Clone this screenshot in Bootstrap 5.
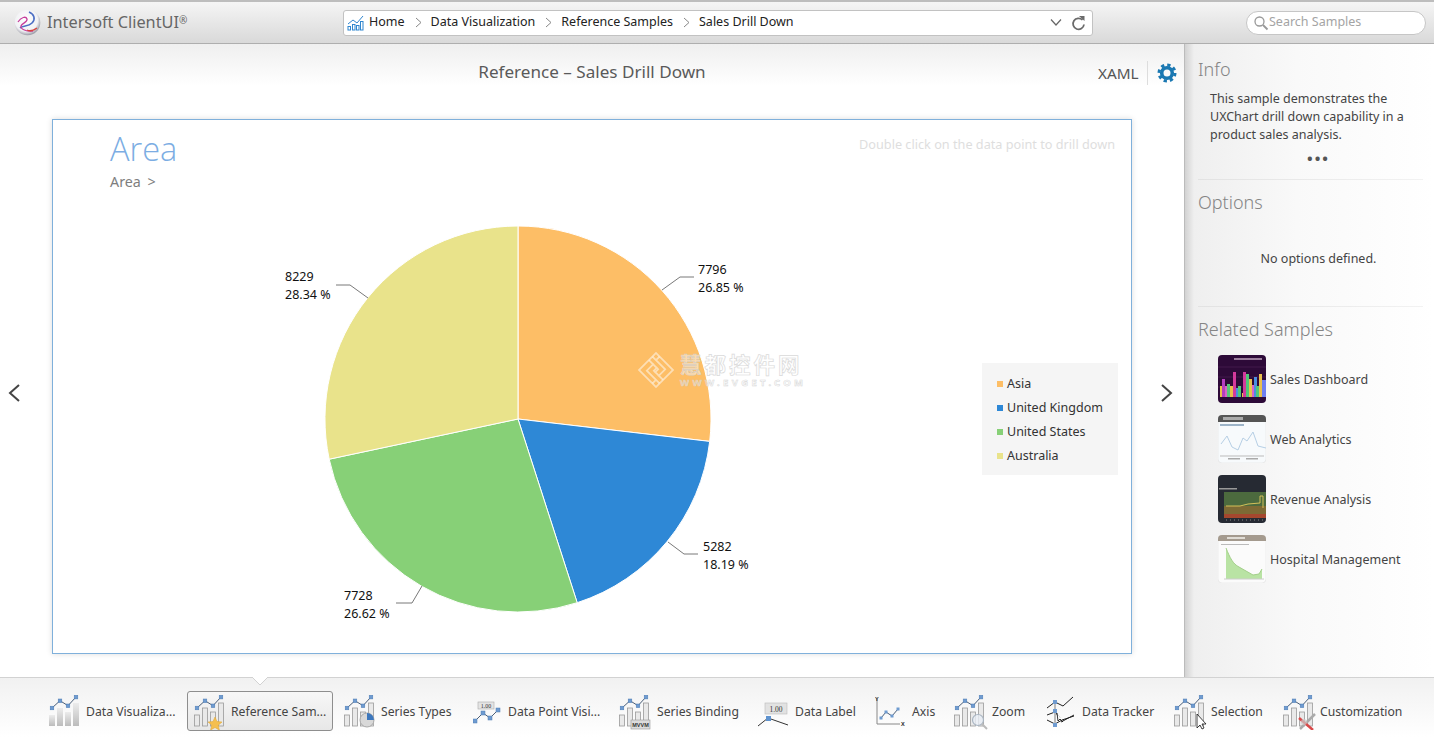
<!DOCTYPE html>
<html lang="en">
<head>
<meta charset="utf-8">
<title>Intersoft ClientUI</title>
<link href="https://cdn.jsdelivr.net/npm/bootstrap@5.3.0/dist/css/bootstrap.min.css" rel="stylesheet">
<style>
html,body{height:737px;overflow:hidden;}
body{font-family:"Noto Sans","Open Sans","Liberation Sans",sans-serif;font-size:12.5px;color:#444;background:#fff;}
.defs-svg{width:0;height:0;display:block;}
.app-shell{width:1434px;height:737px;}
.top-strip{height:44px;background:linear-gradient(#f5f5f5,#d9d9d9);border-top:2px solid #bdbdbd;border-bottom:1px solid #aeaeae;}
.brand-logo{width:27px;height:27px;margin-left:14px;}
.brand-name{font-size:16.3px;color:#666;margin-left:6px;width:296px;white-space:nowrap;}
.brand-name sup{font-size:10px;top:-.45em;}
.address-box{width:750px;height:26px;background:#fff;border:1px solid #c2c2c2;border-radius:3px;padding:0 6px 0 3px;color:#222;}
.crumb-sep{width:7px;height:11px;margin:0 9px 0 10px;flex:none;}
.crumb-ico{width:17px;height:16px;margin-right:5px;}
.search-pill{width:180px;height:24px;margin-left:153px;background:#fff;border:1px solid #c6c6c6;border-radius:12px;padding-left:6px;color:#a4a4a4;}
.work-zone{height:633px;}
.main-pane{width:1184px;background:linear-gradient(#efefef 0,#fff 42px);}
.title-row{height:56px;padding-right:8px;}
.page-title{font-size:17.1px;color:#5a5a5a;text-align:center;width:1184px;margin-top:-1px;}
.xaml-actions{width:0;flex:none;transform:translate(-86px,1px);}
.xaml-word{font-size:15.3px;color:#555;}
.xaml-rule{width:1px;height:24px;background:#ddd;margin:0 9px 0 8px;flex:none;}
.stage-row{height:554px;padding-top:19px;}
.side-arrow{width:52px;flex:none;margin-top:12px;}
.chart-frame{width:1080px;height:535px;border:1px solid #7fb0db;box-shadow:0 0 6px rgba(0,0,0,.14);background:#fff;}
.frame-head{height:72px;padding:7px 16px 0 57px;}
.area-big{font-size:32.5px;line-height:44px;color:#7cade3;font-weight:300;font-family:"Open Sans","Noto Sans",sans-serif;}
.area-small{font-size:14.300px;line-height:18px;color:#7e7e7e;margin-top:2px;word-spacing:3px;}
.drill-hint{font-size:12.700px;color:#dedede;margin-top:8px;}
.chart-row{height:461px;}
.pie-svg{width:925px;height:461px;display:block;flex:none;}
.legend-box{width:136px;height:112px;margin:171px 0 0 4px;background:#f5f5f5;padding:9px 0 0 15px;color:#333;}
.legend-line{height:24px;}
.swatch{width:6px;height:6px;margin-right:4px;flex:none;}
.c-asia{background:#fdbe66;}.c-uk{background:#2e88d6;}.c-us{background:#87d077;}.c-au{background:#e9e38b;}
.side-pane{width:250px;background:linear-gradient(90deg,#d2d2d2 0,#efefef 9px,#f9f9f9 45%,#fff 100%);padding:0 11px 0 13px;border-left:1px solid #bbb;}
.side-head{font-size:18px;line-height:24px;color:#858585;font-weight:300;}
.head-info{margin-top:13px;}
.head-options{margin-top:10px;}
.head-related{margin:10px 0 8px;}
.side-text{padding-left:12px;line-height:18px;margin-top:9px;color:#444;}
.more-dots{text-align:center;font-weight:700;font-size:15px;letter-spacing:2px;line-height:14px;color:#555;padding-left:16px;margin-top:7px;height:28px;}
.side-rule{height:1px;background:linear-gradient(90deg,#e2e2e2,#f2f2f2);}
.none-note{text-align:center;padding-left:16px;margin-top:36px;height:56px;}
.related-row{height:60px;padding-left:20px;gap:4px;}
.related-name{margin-top:2px;}
.thumb-svg{width:48px;height:48px;flex:none;}
.tool-strip{height:60px;padding-top:13px;background:linear-gradient(#f1f1f1,#fff);border-top:1px solid #d2d2d2;position:relative;}
.tool-grid{display:grid;grid-template-columns:144px 151px 130px 145px 140px 117px 78px 93px 127px 109px 130px;margin-left:43px;font-size:12.200px;}
.tool-item{height:40px;color:#444;white-space:nowrap;padding:2px 0 0 5px;gap:2px;}
.tool-item svg{height:36px;flex:none;}
.w36{width:36px;}.w37{width:37px;}.w33{width:33px;}.w35{width:35px;}.w34{width:34px;}
.tool-active{margin-right:5px;border:1px solid #8e8e8e;border-radius:3px;background:linear-gradient(#f7f7f7,#e7e7e7);}
.tip-caret{position:absolute;left:252px;top:-1px;width:16px;height:9px;}
.ico-xs{width:14px;height:9px;}
.arrow-shift{margin-left:17px;}
</style>
</head>
<body>
<svg class="defs-svg" aria-hidden="true">
<defs>
<linearGradient id="gb" x1="0" y1="0" x2="0" y2="1"><stop offset="0" stop-color="#ececec"/><stop offset="1" stop-color="#bcbcbc"/></linearGradient>
<radialGradient id="orb" cx=".45" cy=".4" r=".62"><stop offset="0" stop-color="#fff"/><stop offset=".72" stop-color="#f1f1f4"/><stop offset="1" stop-color="#8f8f9c"/></radialGradient>
<symbol id="s-line" viewBox="0 0 36 36"><path d="M4 14 12 6.700 20 11.700 28 3" fill="none" stroke="#4a5e78" stroke-width="1"/><g fill="#6f9bd0" stroke="#4d7db5" stroke-width=".5"><rect x="2.200" y="12.200" width="3.600" height="3.600"/><rect x="10.200" y="5" width="3.600" height="3.600"/><rect x="18.200" y="10" width="3.600" height="3.600"/><rect x="26.200" y="1.300" width="3.600" height="3.600"/></g></symbol>
<symbol id="s-solid" viewBox="0 0 36 36"><g fill="url(#gb)"><rect x="1" y="21" width="6" height="11"/><rect x="9" y="14" width="6" height="18"/><rect x="17" y="18" width="6" height="14"/><rect x="25" y="9" width="6" height="23"/></g><use href="#s-line" width="36" height="36"/></symbol>
<symbol id="s-open" viewBox="0 0 36 36"><g fill="#e9e9e9" stroke="#9a9a9a" stroke-width=".8"><rect x="1.500" y="21" width="5" height="11"/><rect x="9.500" y="14" width="5" height="18"/><rect x="17.500" y="18" width="5" height="14"/><rect x="25.500" y="9" width="5" height="23"/></g><use href="#s-line" width="36" height="36"/></symbol>
</defs>
</svg>
<div class="app-shell d-flex flex-column">
  <div class="top-strip d-flex align-items-center">
    <svg class="brand-logo" viewBox="0 0 27 27"><circle cx="13.500" cy="13.500" r="12.800" fill="url(#orb)"/><path d="M15 3c5 2 7 7 3 11s-9 2-12 5" fill="none" stroke="#4d6fc4" stroke-width="1.600"/><path d="M4 13c3-5 8-6 9-3s-5 4-6 7 6 6 12 5" fill="none" stroke="#c63d9c" stroke-width="1.300"/><path d="M13 21c4 2 7 0 10-2" fill="none" stroke="#d8423c" stroke-width="1.200"/></svg>
    <div class="brand-name">Intersoft ClientUI<sup>®</sup></div>
    <div class="address-box d-flex align-items-center">
      <svg class="crumb-ico" viewBox="0 0 17 16"><g fill="none" stroke="#2f86cf" stroke-width="1"><rect x="1" y="11.500" width="2.500" height="3.500"/><rect x="5.500" y="9.500" width="2.500" height="5.500"/><rect x="9.500" y="10.500" width="2.500" height="4.500"/><rect x="13.500" y="6.500" width="2.500" height="8.500"/><path d="M1 9 6 5l4 3 6-7"/></g></svg>
      <span>Home</span>
      <svg class="crumb-sep" viewBox="0 0 7 11"><path d="M1 1l5 4.500L1 10" fill="none" stroke="#888"/></svg>
      <span>Data Visualization</span>
      <svg class="crumb-sep" viewBox="0 0 7 11"><path d="M1 1l5 4.500L1 10" fill="none" stroke="#888"/></svg>
      <span>Reference Samples</span>
      <svg class="crumb-sep" viewBox="0 0 7 11"><path d="M1 1l5 4.500L1 10" fill="none" stroke="#888"/></svg>
      <span>Sales Drill Down</span>
      <svg class="ico-xs ms-auto" viewBox="0 0 14 9"><path d="M2 1.500 7 7l5-5.500" fill="none" stroke="#666" stroke-width="1.200"/></svg>
      <svg class="ms-2" width="15" height="16" viewBox="0 0 15 16"><path d="M11.500 5A5.500 5.500 0 1 0 13 9.500" fill="none" stroke="#6a6a6a" stroke-width="1.800"/><path d="M8 1h5.500v5z" fill="#6a6a6a"/></svg>
    </div>
    <div class="search-pill d-flex align-items-center">
      <svg width="16" height="16" viewBox="0 0 16 16"><circle cx="6.500" cy="6.500" r="4.500" fill="none" stroke="#999" stroke-width="1.300"/><path d="M10 10l4.500 4.500" stroke="#999" stroke-width="1.800"/></svg>
      <span>Search Samples</span>
    </div>
  </div>
  <div class="work-zone d-flex">
    <div class="main-pane">
      <div class="title-row d-flex align-items-center">
        <div class="page-title flex-shrink-0">Reference – Sales Drill Down</div>
        <div class="xaml-actions d-flex align-items-center">
          <span class="xaml-word">XAML</span>
          <span class="xaml-rule"></span>
          <svg class="flex-shrink-0" width="20" height="20" viewBox="0 0 20 20"><circle cx="10" cy="10" r="5.300" fill="none" stroke="#1a78b2" stroke-width="3.600"/><circle cx="10" cy="10" r="8" fill="none" stroke="#1a78b2" stroke-width="3" stroke-dasharray="3.300 2.980"/></svg>
        </div>
      </div>
      <div class="stage-row d-flex align-items-start">
        <div class="side-arrow d-flex justify-content-center align-self-center"><svg width="16" height="20" viewBox="0 0 16 20" class="me-4"><path d="M13 2 4 10l9 8" fill="none" stroke="#444" stroke-width="2"/></svg></div>
        <div class="chart-frame flex-shrink-0">
          <div class="frame-head d-flex justify-content-between align-items-start">
            <div><div class="area-big">Area</div><div class="area-small">Area &gt;</div></div>
            <div class="drill-hint">Double click on the data point to drill down</div>
          </div>
          <div class="chart-row d-flex align-items-start">
            <svg class="pie-svg" viewBox="53 192 925 461">
              <g stroke="#fff" stroke-width="1">
                <path d="M518 419V226A193 193 0 0 1 709.700 441.400Z" fill="#fdbe66"/>
                <path d="M518 419 709.700 441.400A193 193 0 0 1 577.200 602.700Z" fill="#2e88d6"/>
                <path d="M518 419 577.200 602.700A193 193 0 0 1 329.200 459.200Z" fill="#87d077"/>
                <path d="M518 419 329.200 459.200A193 193 0 0 1 518 226Z" fill="#e9e38b"/>
              </g>
              <g fill="none" stroke="#555" stroke-width=".8">
                <path d="M662 290 680 277H694"/><path d="M368 298 350 285H336"/><path d="M668 542 684 554H698"/><path d="M422 586 412 603H396"/>
              </g>
              <g font-family="'Noto Sans',sans-serif" font-size="12.500" fill="#111">
                <text x="698" y="274">7796</text><text x="698" y="292">26.85 %</text>
                <text x="285" y="281">8229</text><text x="285" y="299">28.34 %</text>
                <text x="703" y="551">5282</text><text x="703" y="569">18.19 %</text>
                <text x="344" y="600">7728</text><text x="344" y="618">26.62 %</text>
              </g>
              <g opacity=".85">
                <g transform="translate(656 370) rotate(45)" fill="none" stroke="#fff" stroke-opacity=".6" stroke-width="1.800"><rect x="-12" y="-12" width="24" height="24"/><path d="M-12-7H6V3M-12-2H1V3M-7-12V-7M12 7H-6V-3M12 2H-1V-3M7 12V7"/></g>
                <text x="680" y="373" font-family="'Noto Sans CJK SC',sans-serif" font-weight="700" font-size="21.500" letter-spacing="3" fill="#fff" fill-opacity=".55" stroke="#d4d4d4" stroke-width=".7">慧都控件网</text>
                <text x="680" y="385.500" textLength="123" font-family="'Noto Sans',sans-serif" font-weight="700" font-size="9.500" fill="#fff" fill-opacity=".55" stroke="#d0d0d0" stroke-width=".5">WWW.EVGET.COM</text>
              </g>
            </svg>
            <div class="legend-box flex-shrink-0">
              <div class="legend-line d-flex align-items-center"><span class="swatch c-asia"></span>Asia</div>
              <div class="legend-line d-flex align-items-center"><span class="swatch c-uk"></span>United Kingdom</div>
              <div class="legend-line d-flex align-items-center"><span class="swatch c-us"></span>United States</div>
              <div class="legend-line d-flex align-items-center"><span class="swatch c-au"></span>Australia</div>
            </div>
          </div>
        </div>
        <div class="side-arrow d-flex justify-content-center align-self-center"><svg width="16" height="20" viewBox="0 0 16 20" class="arrow-shift"><path d="M3 2l9 8-9 8" fill="none" stroke="#444" stroke-width="2"/></svg></div>
      </div>
    </div>
    <div class="side-pane flex-grow-1">
      <div class="side-head head-info">Info</div>
      <div class="side-text">This sample demonstrates the UXChart drill down capability in a product sales analysis.</div>
      <div class="more-dots">•••</div>
      <div class="side-rule"></div>
      <div class="side-head head-options">Options</div>
      <div class="none-note">No options defined.</div>
      <div class="side-rule"></div>
      <div class="side-head head-related">Related Samples</div>
      <div class="related-row d-flex align-items-center">
        <svg class="thumb-svg" viewBox="0 0 48 48"><rect width="48" height="48" rx="4" fill="#2d0a38"/><path d="M0 12H48M0 22H48M0 32H48" stroke="#5a2a5e" stroke-width=".5"/><rect x="16" y="3" width="28" height="2" fill="#9a7d9c"/><g><rect x="2" y="31" width="3" height="11" fill="#e9c04c"/><rect x="4" y="24" width="3" height="18" fill="#b43fc0"/><rect x="7" y="31" width="3" height="11" fill="#d964c8"/><rect x="9" y="29" width="3" height="13" fill="#56c879"/><rect x="12" y="31" width="3" height="11" fill="#e9c04c"/><rect x="15" y="33" width="3" height="9" fill="#e2a34c"/><rect x="15" y="17" width="3" height="25" fill="#d43a9c"/><rect x="18" y="33" width="3" height="9" fill="#4a8fe0"/><rect x="20" y="31" width="3" height="11" fill="#50c878"/><rect x="24" y="38" width="3" height="4" fill="#e9c04c"/><rect x="26" y="35" width="3" height="7" fill="#b43fc0"/><rect x="25" y="17" width="3" height="25" fill="#d43a9c"/><rect x="28" y="19" width="3" height="23" fill="#50c878"/><rect x="31" y="24" width="3" height="18" fill="#e9c04c"/><rect x="34" y="30" width="3" height="12" fill="#d964c8"/><rect x="36" y="22" width="3" height="20" fill="#4a8fe0"/><rect x="38" y="31" width="3" height="11" fill="#50c878"/><rect x="41" y="19" width="3" height="23" fill="#e9c04c"/><rect x="44" y="25" width="4" height="17" fill="#6f7ff0"/></g></svg>
        <span class="related-name">Sales Dashboard</span>
      </div>
      <div class="related-row d-flex align-items-center">
        <svg class="thumb-svg" viewBox="0 0 48 48"><rect width="48" height="48" rx="4" fill="#f7fafc" stroke="#ddd" stroke-width=".5"/><path d="M0 4a4 4 0 0 1 4-4h40a4 4 0 0 1 4 4v3H0z" fill="#555"/><rect x="5" y="2" width="20" height="3" fill="#aaa"/><rect x="2" y="9" width="24" height="2" fill="#9db4c8"/><path d="M3 29 9 21l5 11 6 3 5-12 4 3 6-9 5 14 8 2" fill="none" stroke="#b6cfe5" stroke-width="1"/><path d="M2 41H46" stroke="#bbb"/><rect x="10" y="43" width="12" height="1.500" fill="#aaa"/><rect x="28" y="43" width="12" height="1.500" fill="#aaa"/></svg>
        <span class="related-name">Web Analytics</span>
      </div>
      <div class="related-row d-flex align-items-center">
        <svg class="thumb-svg" viewBox="0 0 48 48"><rect width="48" height="48" rx="4" fill="#262a33"/><rect x="6" y="17" width="42" height="14" fill="#4c6a3e"/><rect x="6" y="31" width="42" height="9" fill="#7d6a35"/><rect x="6" y="39" width="42" height="4" fill="#a5472e"/><rect x="1" y="13" width="18" height="1.500" fill="#999"/><path d="M8 31H22l8-2 12-1V21h3v12" fill="none" stroke="#e2c95c" stroke-width=".9"/><path d="M8 45H46" stroke="#888" stroke-dasharray="1 3"/></svg>
        <span class="related-name">Revenue Analysis</span>
      </div>
      <div class="related-row d-flex align-items-center">
        <svg class="thumb-svg" viewBox="0 0 48 48"><rect width="48" height="48" rx="4" fill="#fbfbfb" stroke="#ddd" stroke-width=".5"/><path d="M0 4a4 4 0 0 1 4-4h40a4 4 0 0 1 4 4v2H0z" fill="#a49a8e"/><rect x="9" y="2" width="18" height="2" fill="#e0dcd5"/><rect x="3" y="9" width="28" height="1" fill="#bbb"/><path d="M8 13c4 10 7 16 13 19l14 8 6-1 3-5v10H8z" fill="#b9e3a4"/><path d="M8 13c4 10 7 16 13 19l14 8 6-1 3-5" fill="none" stroke="#a3cf8a"/><path d="M6 44H46" stroke="#ccc"/></svg>
        <span class="related-name">Hospital Management</span>
      </div>
    </div>
  </div>
  <div class="tool-strip">
    <svg class="tip-caret" viewBox="0 0 16 9"><path d="M0 0 8 8l8-8" fill="#fff" stroke="#d2d2d2"/></svg>
    <div class="tool-grid">
      <div class="tool-item d-flex align-items-center"><svg class="w36" viewBox="0 0 36 36"><use href="#s-solid"/></svg><span>Data Visualiza...</span></div>
      <div class="tool-item tool-active d-flex align-items-center"><svg class="w36" viewBox="0 0 36 36"><use href="#s-open"/><path d="M22 23l2 4.500 5 .5-3.700 3.200 1.100 5L22 33.500 17.600 36l1.100-5L15 28l5-.5z" fill="#f5bf4f" stroke="#dfa430" stroke-width=".5"/></svg><span>Reference Sam...</span></div>
      <div class="tool-item d-flex align-items-center"><svg class="w36" viewBox="0 0 36 36"><use href="#s-open"/><circle cx="24" cy="26" r="7" fill="#d8d8d8" stroke="#aaa"/><path d="M24 26v-7a7 7 0 0 1 7 7z" fill="#3c77bd"/></svg><span>Series Types</span></div>
      <div class="tool-item d-flex align-items-center"><svg class="w33" viewBox="0 0 33 36"><path d="M2 27 10 19l7 5 8-8" fill="none" stroke="#4a5e78"/><g fill="#6f9bd0" stroke="#4d7db5" stroke-width=".5"><rect x="0" y="25" width="4" height="4"/><rect x="8" y="17" width="4" height="4"/><rect x="15" y="22" width="4" height="4"/><rect x="23" y="14" width="4" height="4"/></g><rect x="5" y="8" width="16" height="7" fill="#e4e4e4" stroke="#aaa" stroke-width=".6"/><text x="13" y="13.800" text-anchor="middle" font-family="'Liberation Serif',serif" font-size="6" fill="#333">1.00</text></svg><span>Data Point Visi...</span></div>
      <div class="tool-item d-flex align-items-center"><svg class="w37" viewBox="0 0 37 36"><use href="#s-open" width="36" height="36"/><rect x="13" y="26" width="19" height="9" fill="#dcdcdc" stroke="#999" stroke-width=".6"/><text x="22.500" y="33" text-anchor="middle" font-family="'Liberation Sans',sans-serif" font-size="5.500" font-weight="700" fill="#333">MVVM</text></svg><span>Series Binding</span></div>
      <div class="tool-item d-flex align-items-center"><svg class="w35" viewBox="0 0 35 36"><rect x="7" y="9" width="22" height="11" fill="#e2e2e2" stroke="#bbb" stroke-width=".6"/><text x="18" y="17.500" text-anchor="middle" font-family="'Liberation Serif',serif" font-size="7.500" fill="#333">1.00</text><path d="M0 32 10 24l20 7" fill="none" stroke="#333"/><rect x="8" y="22" width="5" height="5" fill="#5f93cf"/></svg><span>Data Label</span></div>
      <div class="tool-item d-flex align-items-center"><svg class="w35" viewBox="0 0 35 36"><path d="M2 5V30H25" fill="none" stroke="#888"/><path d="M6 24 11 18l6 4 6-7" fill="none" stroke="#4a5e78"/><g fill="#6f9bd0"><rect x="4.500" y="22.500" width="3" height="3"/><rect x="9.500" y="16.500" width="3" height="3"/><rect x="15.500" y="20.500" width="3" height="3"/><rect x="21.500" y="13.500" width="3" height="3"/></g><text x="0" y="7" font-family="'Liberation Sans',sans-serif" font-size="5.500" font-weight="700" fill="#222">Y</text><text x="26" y="32" font-family="'Liberation Sans',sans-serif" font-size="5.500" font-weight="700" fill="#222">X</text></svg><span>Axis</span></div>
      <div class="tool-item d-flex align-items-center"><svg class="w37" viewBox="0 0 37 36"><use href="#s-open" width="36" height="36"/><circle cx="25" cy="26" r="5.500" fill="#e8eef5" fill-opacity=".8" stroke="#a9b5c2" stroke-width="1.200"/><path d="M29 30l5 5" stroke="#bbb" stroke-width="2"/></svg><span>Zoom</span></div>
      <div class="tool-item d-flex align-items-center"><svg class="w34" viewBox="0 0 34 36"><path d="M1 14 9 8l8 4 10-9M1 21l8-3 5 6M15 28l13-7M1 26l8 4 7-4 12-4" fill="none" stroke="#222"/><path d="M9 9V30" stroke="#bbb" stroke-width="2"/><g fill="#6f9bd0"><rect x="7" y="6" width="4" height="4"/><rect x="7" y="15" width="4" height="4"/><rect x="7" y="29" width="4" height="4"/></g><path d="M11 19l1 8 2-2 3 3" fill="#fff" stroke="#000" stroke-width=".8"/></svg><span>Data Tracker</span></div>
      <div class="tool-item d-flex align-items-center"><svg class="w36" viewBox="0 0 36 36"><use href="#s-open"/><path d="M24 20v14l3-3 2 4 2-1-2-4h4z" fill="#fff" stroke="#111" stroke-width=".8"/></svg><span>Selection</span></div>
      <div class="tool-item d-flex align-items-center"><svg class="w36" viewBox="0 0 36 36"><use href="#s-open"/><path d="M18 35 33 20" stroke="#aaa" stroke-width="2.500"/><path d="M17 24 31 36" stroke="#d84848" stroke-width="2.500"/><circle cx="22" cy="28" r="3" fill="#ccc" opacity=".7"/></svg><span>Customization</span></div>
    </div>
  </div>
</div>
<script src="https://cdn.jsdelivr.net/npm/bootstrap@5.3.0/dist/js/bootstrap.bundle.min.js"></script>
</body>
</html>
